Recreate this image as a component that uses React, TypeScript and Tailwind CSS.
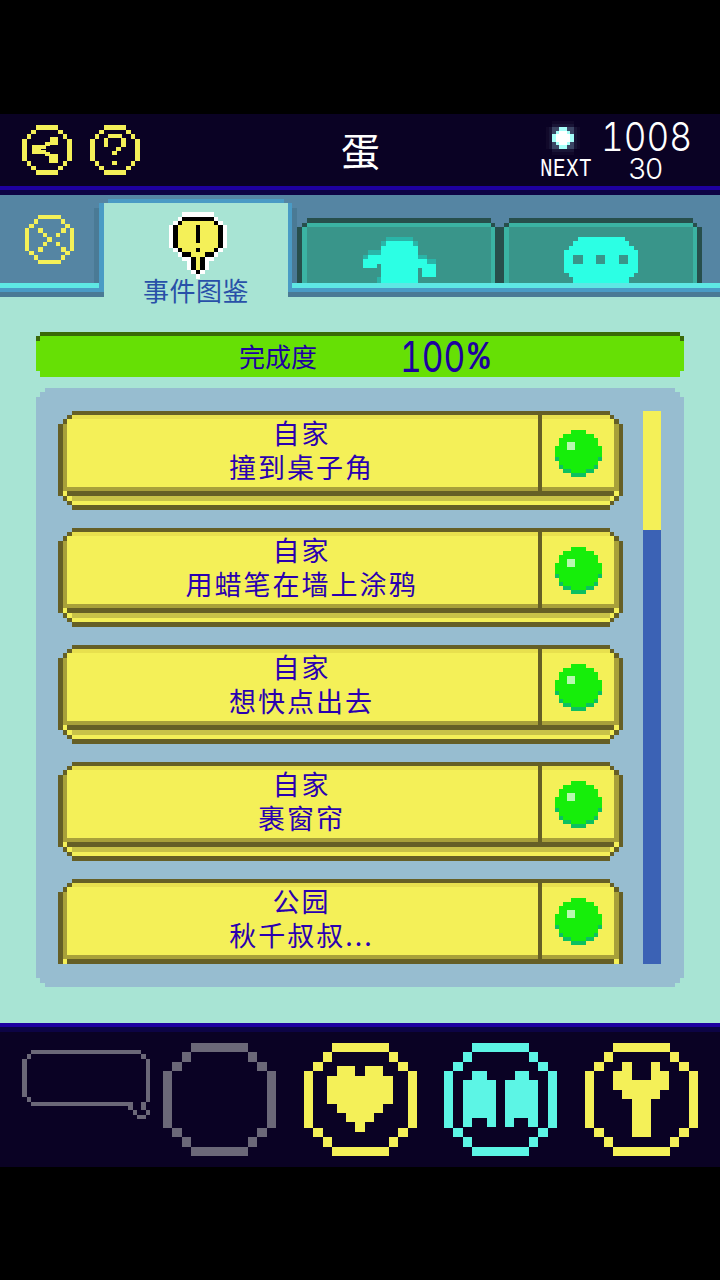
type Box = [number, number, number, number];

const CJK = "font-['Noto_Sans_CJK_SC',sans-serif]";
const MONO = "font-['Liberation_Mono',monospace]";
const NUM = "font-['Inter',sans-serif] tabular-nums";

const YELLOW = "#f4f058";
const CYAN = "#5cf5e5";
const GRAY = "#6b6878";

function Boxes({ boxes, fill }: { boxes: Box[]; fill: string }) {
  return (
    <>
      {boxes.map(([x, y, w, h], i) => (
        <rect key={i} x={x} y={y} width={w} height={h} fill={fill} />
      ))}
    </>
  );
}

// octagon ring made of blocks, n = blocks across
function Ring({ size, n, color, glyph, className }: { size: number; n: number; color: string; glyph?: Box[]; className: string }) {
  const u = size / n;
  const ring: Box[] = [
    [3 * u, 0, (n - 6) * u, u],
    [3 * u, (n - 1) * u, (n - 6) * u, u],
    [0, 3 * u, u, (n - 6) * u],
    [(n - 1) * u, 3 * u, u, (n - 6) * u],
    [2 * u, u, u, u],
    [u, 2 * u, u, u],
    [(n - 3) * u, u, u, u],
    [(n - 2) * u, 2 * u, u, u],
    [u, (n - 3) * u, u, u],
    [2 * u, (n - 2) * u, u, u],
    [(n - 2) * u, (n - 3) * u, u, u],
    [(n - 3) * u, (n - 2) * u, u, u],
  ];
  return (
    <svg viewBox={`0 0 ${size} ${size}`} shapeRendering="crispEdges" className={className}>
      <Boxes boxes={ring} fill={color} />
      {glyph && <Boxes boxes={glyph} fill={color} />}
    </svg>
  );
}

function Pixels({ rows, colors, className }: { rows: string[]; colors: Record<string, string>; className: string }) {
  return (
    <svg viewBox={`0 0 ${rows[0].length} ${rows.length}`} shapeRendering="crispEdges" className={className}>
      {rows.map((row, y) =>
        row.split("").map((c, x) => (colors[c] ? <rect key={`${x}-${y}`} x={x} y={y} width={1} height={1} fill={colors[c]} /> : null))
      )}
    </svg>
  );
}

const shareGlyph: Box[] = [
  [28, 12, 8, 8],
  [10, 20, 9, 9],
  [27, 29, 9, 9],
  [19, 20, 5, 4],
  [23, 17, 5, 4],
  [19, 25, 5, 4],
  [23, 27, 5, 4],
];
const helpGlyph: Box[] = [
  [18, 9, 14, 4],
  [14, 13, 4, 9],
  [31, 13, 5, 9],
  [26, 22, 5, 4],
  [22, 26, 5, 4],
  [22, 36, 5, 4],
];
const closeGlyph: Box[] = [
  [22, 22, 5, 5],
  [13, 13, 5, 5],
  [18, 18, 4, 4],
  [31, 18, 4, 4],
  [36, 13, 5, 5],
  [18, 27, 4, 4],
  [13, 32, 5, 5],
  [31, 27, 4, 4],
  [36, 32, 5, 5],
];
const heartGlyph: Box[] = [
  [33, 23, 18, 10],
  [61, 23, 18, 10],
  [23, 33, 66, 28],
  [33, 61, 46, 9],
  [42, 70, 28, 9],
  [51, 79, 10, 10],
];
const twinGlyph: Box[] = [
  [28, 28, 15, 9],
  [19, 37, 33, 38],
  [19, 75, 9, 9],
  [43, 75, 9, 9],
  [71, 28, 14, 9],
  [61, 37, 33, 38],
  [61, 75, 9, 9],
  [84, 75, 10, 9],
];
const wrenchGlyph: Box[] = [
  [37, 19, 10, 9],
  [66, 19, 9, 9],
  [28, 28, 19, 9],
  [66, 28, 18, 9],
  [28, 37, 56, 10],
  [37, 47, 38, 9],
  [47, 56, 19, 38],
];

const orb = [
  "....gggg....",
  "..gggggggg..",
  ".gggggggggg.",
  ".ggwwgggggg.",
  "gggwwggggggg",
  "gggggggggggg",
  "gggggggggggg",
  "tggggggggggt",
  ".gggggggggg.",
  ".tggggggggt.",
  "..ttggggtt..",
  "....tttt....",
];

const balloon = [
  "...wwwwwww...",
  "..wkkkkkkkw..",
  ".wkyyyyyyykw.",
  "wkyyyykyyyykw",
  "wkyyyykyyyykw",
  "wkyyyykyyyykw",
  "wkyyyykyyyykw",
  "wkyyyyyyyyykw",
  ".wkyyykyyykw.",
  "..wkkyyykkw..",
  "...wwkykww...",
  "....wkykw....",
  "....wkykw....",
  ".....wkw.....",
  "......w......",
];

function SpeechIcon() {
  const outline: Box[] = [
    [9, 0, 110, 4],
    [5, 4, 4, 5],
    [0, 9, 5, 38],
    [5, 47, 4, 5],
    [9, 52, 102, 4],
    [106, 56, 5, 4],
    [111, 60, 4, 5],
    [115, 65, 9, 4],
    [124, 60, 4, 5],
    [119, 52, 5, 8],
    [124, 9, 4, 43],
    [119, 4, 5, 5],
  ];
  return (
    <svg viewBox="0 0 128 69" shapeRendering="crispEdges" className="w-[128px] h-[69px] mt-[7px]">
      <Boxes boxes={outline} fill={GRAY} />
    </svg>
  );
}

function Gem() {
  return (
    <svg viewBox="0 0 38 38" shapeRendering="crispEdges" className="w-[38px] h-[38px]">
      <rect x={8} y={2} width={22} height={34} fill="#ffffff" opacity={0.03} />
      <rect x={2} y={8} width={34} height={22} fill="#ffffff" opacity={0.03} />
      <rect x={8} y={5} width={22} height={28} fill="#8fb8d8" opacity={0.07} />
      <rect x={5} y={8} width={28} height={22} fill="#8fb8d8" opacity={0.07} />
      <rect x={8} y={8} width={22} height={22} fill="#8fc8e0" opacity={0.2} />
      <rect x={15} y={8} width={8} height={22} fill="#a6fff8" />
      <rect x={8} y={15} width={22} height={8} fill="#a6fff8" />
      <rect x={12} y={12} width={14} height={14} fill="#a6fff8" />
      <rect x={15} y={12} width={8} height={14} fill="#ffffff" />
      <rect x={12} y={15} width={14} height={8} fill="#ffffff" />
    </svg>
  );
}

function FigureIcon() {
  const shade: Box[] = [
    [23, 0, 27, 4],
    [18, 4, 5, 5],
    [50, 4, 5, 5],
    [5, 13, 14, 5],
    [0, 18, 5, 4],
    [55, 18, 9, 4],
    [64, 22, 9, 5],
    [14, 40, 4, 6],
  ];
  const body: Box[] = [
    [23, 4, 27, 5],
    [18, 9, 37, 37],
    [5, 18, 13, 4],
    [0, 22, 18, 5],
    [0, 27, 14, 4],
    [55, 22, 9, 5],
    [55, 27, 18, 4],
    [59, 31, 14, 9],
  ];
  return (
    <svg viewBox="0 0 73 46" shapeRendering="crispEdges" className="w-[73px] h-[46px]">
      <Boxes boxes={shade} fill="#2ab5a8" />
      <Boxes boxes={body} fill="#2cffe4" />
    </svg>
  );
}

function BubbleIcon() {
  const body: Box[] = [
    [14, 0, 47, 4],
    [9, 4, 56, 5],
    [5, 9, 65, 4],
    [0, 13, 74, 23],
    [5, 36, 65, 4],
    [9, 40, 56, 6],
  ];
  const dots: Box[] = [
    [9, 18, 10, 9],
    [32, 18, 9, 9],
    [55, 18, 9, 9],
  ];
  return (
    <svg viewBox="0 0 74 46" shapeRendering="crispEdges" className="w-[74px] h-[46px]">
      <Boxes boxes={body} fill="#2cffe4" />
      <Boxes boxes={dots} fill="#39958a" />
    </svg>
  );
}

function TabBody({ children, className }: { children: React.ReactNode; className: string }) {
  return (
    <div className={`flex h-[65px] ${className}`}>
      <div className="w-[5px] shrink-0 pt-[5px]">
        <div className="h-[4px] bg-[#274f4c]" />
        <div className="h-[56px] bg-[#3bb3a3]" />
      </div>
      <div className="flex-1 flex flex-col">
        <div className="h-[5px] bg-[#274f4c]" />
        <div className="h-[4px] bg-[#3bb3a3]" />
        <div className="h-[56px] bg-[#39958a] flex items-end justify-center">{children}</div>
      </div>
      <div className="w-[4px] shrink-0 pt-[5px]">
        <div className="h-[4px] bg-[#274f4c]" />
        <div className="h-[56px] bg-[#3bb3a3]" />
      </div>
    </div>
  );
}

function ItemRow({ place, title }: { place: string; title: string }) {
  return (
    <div className="flex h-[99px] w-[565px] shrink-0">
      {/* left edge */}
      <div className="w-[5px] pt-[13px]">
        <div className="h-[72px] bg-[#655f26]" />
      </div>
      <div className="w-[4px] pt-[8px]">
        <div className="h-[5px] bg-[#655f26]" />
        <div className="h-[67px] bg-[#a8a03a]" />
        <div className="h-[5px] bg-[#f4f058]" />
        <div className="h-[5px] bg-[#655f26]" />
      </div>
      <div className="w-[5px] pt-[4px]">
        <div className="h-[4px] bg-[#655f26]" />
        <div className="h-[68px] bg-[#f4f058]" />
        <div className="h-[4px] bg-[#a8a03a]" />
        <div className="h-[5px] bg-[#655f26]" />
        <div className="h-[5px] bg-[#f4f058]" />
        <div className="h-[4px] bg-[#655f26]" />
      </div>
      {/* middle */}
      <div className="flex-1 flex flex-col">
        <div className="flex h-[85px]">
          <div className="flex-1 flex flex-col">
            <div className="h-[4px] bg-[#655f26]" />
            <div className="h-[4px] bg-[#e8e04e]" />
            <div className={`h-[68px] bg-[#f4f058] flex flex-col items-center pr-[7px] text-[#2a00b0] text-[27px] tracking-[2px] leading-[34px] ${CJK}`}>
              <div className="h-[34px] -mt-[3px]">{place}</div>
              <div className="h-[34px]">{title}</div>
            </div>
            <div className="h-[4px] bg-[#a8a03a]" />
            <div className="h-[5px] bg-[#655f26]" />
          </div>
          <div className="w-[4px] bg-[#655f26]" />
          <div className="w-[68px] flex flex-col">
            <div className="h-[4px] bg-[#655f26]" />
            <div className="h-[4px] bg-[#e8e04e]" />
            <div className="h-[68px] bg-[#f4f058] flex justify-start pt-[11px] pl-[13px]">
              <Pixels rows={orb} colors={{ g: "#16ee0a", t: "#0cc060", w: "#b8f8b0" }} className="w-[47px] h-[47px]" />
            </div>
            <div className="h-[4px] bg-[#a8a03a]" />
            <div className="h-[5px] bg-[#655f26]" />
          </div>
        </div>
        <div className="h-[5px] bg-[#c8c248]" />
        <div className="h-[4px] bg-[#f4f058]" />
        <div className="h-[5px] bg-[#655f26]" />
      </div>
      {/* right edge */}
      <div className="w-[4px] pt-[4px]">
        <div className="h-[4px] bg-[#655f26]" />
        <div className="h-[68px] bg-[#f4f058]" />
        <div className="h-[4px] bg-[#a8a03a]" />
        <div className="h-[5px] bg-[#655f26]" />
        <div className="h-[5px] bg-[#f4f058]" />
        <div className="h-[4px] bg-[#655f26]" />
      </div>
      <div className="w-[5px] pt-[8px]">
        <div className="h-[5px] bg-[#655f26]" />
        <div className="h-[67px] bg-[#a8a03a]" />
        <div className="h-[5px] bg-[#f4f058]" />
        <div className="h-[5px] bg-[#655f26]" />
      </div>
      <div className="w-[4px] pt-[13px]">
        <div className="h-[72px] bg-[#655f26]" />
      </div>
    </div>
  );
}

const items = [
  { place: "自家", title: "撞到桌子角" },
  { place: "自家", title: "用蜡笔在墙上涂鸦" },
  { place: "自家", title: "想快点出去" },
  { place: "自家", title: "裹窗帘" },
  { place: "公园", title: "秋千叔叔..." },
];

export default function App() {
  return (
    <div className="w-[720px] h-[1280px] bg-black flex flex-col overflow-hidden">
      <div className="h-[114px] shrink-0" />

      {/* top bar */}
      <div className="h-[72px] shrink-0 bg-[#0a0224] flex pl-[22px] pr-[28px]">
        <div className="flex gap-[18px] pt-[11px]">
          <Ring size={50} n={11} color={YELLOW} glyph={shareGlyph} className="w-[50px] h-[50px]" />
          <Ring size={50} n={11} color={YELLOW} glyph={helpGlyph} className="w-[50px] h-[50px]" />
        </div>
        <div className={`flex-1 text-center text-white text-[39px] leading-[70px] pl-[41px] ${CJK}`}>蛋</div>
        <div className="w-[152px] flex flex-col text-white">
          <div className="flex h-[44px] items-start">
            <div className="ml-[4px] pt-[5px] w-[57px] shrink-0">
              <Gem />
            </div>
            <div className={`${NUM} font-light text-[40px] leading-[44px] h-[44px] pt-[1px] w-[90px] scale-x-[0.88] origin-left whitespace-nowrap`}>1008</div>
          </div>
          <div className="flex h-[24px] items-center">
            <div className={`${MONO} text-[21px] h-[24px] leading-[24px] scale-y-[1.2] w-[88px] shrink-0 tracking-[0.4px]`}>NEXT</div>
            <div className={`${NUM} font-light text-[29px] h-[24px] leading-[22px] tracking-[-2px]`}>30</div>
          </div>
        </div>
      </div>
      <div className="h-[4px] shrink-0 bg-[#1e00a0]" />
      <div className="h-[5px] shrink-0 bg-[#0d0445]" />

      {/* tabs */}
      <div className="h-[102px] shrink-0 flex bg-[#a8e4d4]">
        <div className="w-[99px] flex flex-col">
          <div className="h-[88px] bg-[#5585a3] flex">
            <div className="w-[94px] pl-[25px] pt-[20px]">
              <Ring size={49} n={11} color={YELLOW} glyph={closeGlyph} className="w-[49px] h-[49px]" />
            </div>
            <div className="w-[5px] pt-[13px]">
              <div className="h-[75px] bg-[#4a7a95]" />
            </div>
          </div>
          <div className="h-[5px] bg-[#5ee8e4]" />
          <div className="h-[4px] bg-[#4a9bc5]" />
          <div className="h-[5px] bg-[#4a7a95]" />
        </div>
        <div className="w-[5px] flex flex-col">
          <div className="h-[8px] bg-[#5585a3]" />
          <div className="h-[89px] bg-[#4a9bc5]" />
          <div className="h-[5px] bg-[#4a7a95]" />
        </div>
        <div className="w-[184px] h-[102px]">
          <div className="h-[4px] bg-[#5585a3]" />
          <div className="h-[4px] bg-[#5585a3]">
            <div className="h-[4px] bg-[#4a9bc5] mx-[4px]" />
          </div>
          <div className="h-[94px] flex flex-col items-center pt-[9px]">
            <div className="pl-[3px] h-[67px] shrink-0">
              <Pixels rows={balloon} colors={{ w: "#ffffff", k: "#000000", y: YELLOW }} className="w-[58px] h-[67px]" />
            </div>
            <div className={`relative z-10 shrink-0 h-[26px] text-[26px] leading-[26px] -mt-[2px] text-[#2850a8] tracking-[0.5px] whitespace-nowrap ${CJK}`}>事件图鉴</div>
          </div>
        </div>
        <div className="w-[4px] flex flex-col">
          <div className="h-[8px] bg-[#5585a3]" />
          <div className="h-[89px] bg-[#4a9bc5]" />
          <div className="h-[5px] bg-[#4a7a95]" />
        </div>
        <div className="flex-1 flex flex-col">
          <div className="h-[88px] bg-[#5585a3] flex items-end">
            <div className="w-[5px] h-[75px] bg-[#4a7a95]" />
            <div className="w-[5px] h-[56px] bg-[#274f4c]" />
            <TabBody className="w-[193px]">
              <FigureIcon />
            </TabBody>
            <div className="w-[9px] h-[56px] bg-[#274f4c]" />
            <TabBody className="w-[193px]">
              <BubbleIcon />
            </TabBody>
            <div className="w-[5px] h-[56px] bg-[#274f4c]" />
          </div>
          <div className="h-[5px] bg-[#5ee8e4]" />
          <div className="h-[4px] bg-[#4a9bc5]" />
          <div className="h-[5px] bg-[#4a7a95]" />
        </div>
      </div>

      {/* content */}
      <div className="h-[726px] shrink-0 bg-[#a8e4d4] px-[36px] pt-[35px]">
        <div className="flex h-[45px]">
          <div className="w-[4px] pt-[4px]">
            <div className="h-[5px] bg-[#3a6a08]" />
            <div className="h-[30px] bg-[#66e005]" />
          </div>
          <div className="flex-1 flex flex-col">
            <div className="h-[4px] bg-[#3a6a08]" />
            <div className="h-[41px] bg-[#66e005] flex items-center text-[#1e00a0]">
              <div className={`${CJK} text-[26px] leading-none ml-[199px] -mt-[2px]`}>完成度</div>
              <div className={`${NUM} text-[42px] leading-none ml-[83px] w-[68px] scale-x-[0.8] origin-left whitespace-nowrap`}>100</div>
              <div className={`${MONO} text-[36px] leading-none mt-[4px] font-bold scale-y-[1.15]`}>%</div>
            </div>
          </div>
          <div className="w-[4px] pt-[4px]">
            <div className="h-[5px] bg-[#3a6a08]" />
            <div className="h-[30px] bg-[#66e005]" />
          </div>
        </div>

        <div className="mt-[11px] h-[599px] bg-[#97bdd0] pl-[22px] pt-[23px] flex gap-[20px] [clip-path:polygon(9px_0,calc(100%_-_9px)_0,calc(100%_-_9px)_4px,calc(100%_-_4px)_4px,calc(100%_-_4px)_9px,100%_9px,100%_calc(100%_-_9px),calc(100%_-_4px)_calc(100%_-_9px),calc(100%_-_4px)_calc(100%_-_4px),calc(100%_-_9px)_calc(100%_-_4px),calc(100%_-_9px)_100%,9px_100%,9px_calc(100%_-_4px),4px_calc(100%_-_4px),4px_calc(100%_-_9px),0_calc(100%_-_9px),0_9px,4px_9px,4px_4px,9px_4px)]">
          <div className="h-[553px] overflow-hidden flex flex-col gap-[18px]">
            {items.map((item, i) => (
              <ItemRow key={i} place={item.place} title={item.title} />
            ))}
          </div>
          <div className="w-[18px] h-[553px] flex flex-col">
            <div className="h-[119px] bg-[#f4f058]" />
            <div className="flex-1 bg-[#3b62b5]" />
          </div>
        </div>
      </div>

      {/* bottom bar */}
      <div className="h-[4px] shrink-0 bg-[#1e00a0]" />
      <div className="h-[5px] shrink-0 bg-[#0d0445]" />
      <div className="h-[135px] shrink-0 bg-[#0a0224] flex pl-[22px] pt-[11px]">
        <SpeechIcon />
        <div className="flex gap-[27.6px] ml-[13px]">
          <Ring size={113} n={12} color={GRAY} className="w-[113px] h-[113px]" />
          <Ring size={113} n={12} color={YELLOW} glyph={heartGlyph} className="w-[113px] h-[113px]" />
          <Ring size={113} n={12} color={CYAN} glyph={twinGlyph} className="w-[113px] h-[113px]" />
          <Ring size={113} n={12} color={YELLOW} glyph={wrenchGlyph} className="w-[113px] h-[113px]" />
        </div>
      </div>
    </div>
  );
}
